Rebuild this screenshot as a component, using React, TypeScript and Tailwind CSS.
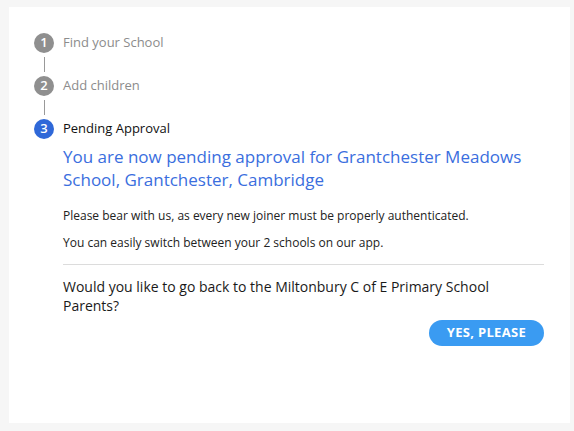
const steps = [
  { n: 1, label: 'Find your School', done: true },
  { n: 2, label: 'Add children', done: true },
  { n: 3, label: 'Pending Approval', done: false },
];

export default function App() {
  return (
    <div className="min-h-screen bg-[#f6f6f6] pt-[7px] pl-[9px] font-['Open_Sans',sans-serif]">
      <div className="w-[561px] h-[416px] bg-white pt-[26px] pl-[25px] pr-[26px]">
        {steps.map((s) => (
          <div key={s.n}>
            <div className="flex items-center gap-[9px] h-[20px]">
              <div
                className={
                  s.done
                    ? 'w-[20px] h-[20px] rounded-full bg-[#8f8f8f] text-white text-[13px] font-semibold flex items-center justify-center'
                    : 'w-[20px] h-[20px] rounded-full bg-[#2f68d8] text-white text-[13px] font-semibold flex items-center justify-center'
                }
              >
                {s.n}
              </div>
              <span className={s.done ? 'text-[13px] text-[#8c8c8c]' : 'text-[13px] text-[#111]'}>
                {s.label}
              </span>
            </div>
            {s.done && <div className="ml-[9.5px] my-[4px] w-px h-[15px] bg-[#999]" />}
          </div>
        ))}
        <div className="pl-[29px]">
          <h1 className="mt-[6px] text-[17px] leading-[23px] text-[#3a6ede]">
            You are now pending approval for Grantchester Meadows School, Grantchester, Cambridge
          </h1>
          <p className="mt-[16px] text-[12px] leading-[18px] text-[#222]">
            Please bear with us, as every new joiner must be properly authenticated.
          </p>
          <p className="mt-[9px] text-[12px] leading-[18px] text-[#222]">
            You can easily switch between your 2 schools on our app.
          </p>
          <div className="mt-[12px] h-px bg-[#dcdcdc]" />
          <p className="mt-[12px] text-[14px] leading-[19px] text-[#1a1a1a]">
            Would you like to go back to the Miltonbury C of E Primary School Parents?
          </p>
          <div className="flex justify-end mt-[5px]">
            <button className="h-[26px] px-[18px] rounded-full bg-[#3a9bf2] text-white text-[13px] tracking-[0.3px] font-bold">
              YES, PLEASE
            </button>
          </div>
        </div>
      </div>
    </div>
  );
}
